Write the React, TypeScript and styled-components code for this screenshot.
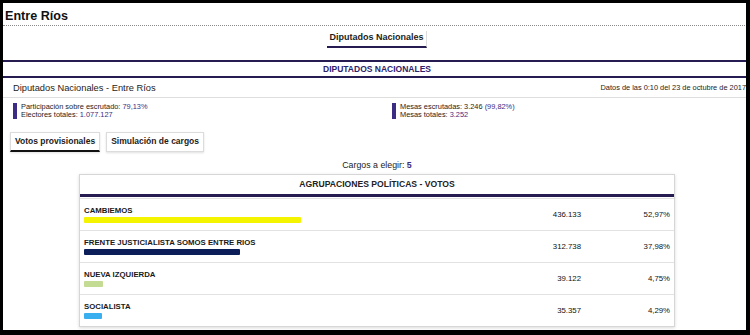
import React from "react";
import styled, { createGlobalStyle, css } from "styled-components";

const ink = "#1c1c1c";
const purple = "#3c2c84";
const navyLine = "#261c52";

const GlobalStyle = createGlobalStyle`
  html, body {
    margin: 0;
    padding: 0;
    background: #000;
  }
  body {
    font-family: "Liberation Sans", Arial, sans-serif;
    color: ${ink};
  }
`;

const Frame = styled.div`
  width: 743px;
  height: 327px;
  margin: 3px 4px 0 3px;
  background: #fff;
  overflow: hidden;
`;

const Content = styled.div`
  width: 748px;
`;

const Title = styled.h1`
  margin: 0;
  padding: 6px 2px 1px;
  font-size: 12.6px;
  line-height: 15px;
  font-weight: bold;
  color: #111;
  border-bottom: 1px dotted #8a8a8a;
`;

const TabBar = styled.nav`
  display: flex;
  justify-content: center;
  padding-top: 5px;
`;

const Tab = styled.div`
  padding: 1px 2px 3px;
  font-size: 9px;
  line-height: 11px;
  font-weight: bold;
  color: ${ink};
  border-bottom: 2px solid ${navyLine};
  border-right: 1px solid #dcdcdc;
`;

const SectionHeader = styled.h2`
  margin: 12px 0 0;
  height: 14px;
  line-height: 14px;
  border-top: 2px solid ${navyLine};
  border-bottom: 2px solid ${navyLine};
  text-align: center;
  font-size: 8.5px;
  font-weight: bold;
  color: #2e216c;
`;

const MetaRow = styled.div`
  display: flex;
  align-items: center;
  justify-content: space-between;
  height: 19px;
  padding: 0 5px 0 10px;
  border-bottom: 1px solid #dedede;
`;

const MetaTitle = styled.span`
  font-size: 9.3px;
  color: ${ink};
`;

const MetaDate = styled.span`
  font-size: 7.4px;
  color: ${ink};
`;

const InfoRow = styled.div`
  display: grid;
  grid-template-columns: 379px 1fr;
  padding: 5px 0 0 10px;
`;

const InfoBlock = styled.div`
  border-left: 4px solid ${purple};
  padding-left: 4px;
  font-size: 7.4px;
  line-height: 8px;
  color: ${ink};
`;

const Value = styled.span`
  color: ${purple};
`;

const ButtonRow = styled.div`
  display: flex;
  gap: 6px;
  margin-top: 13px;
  padding-left: 7px;
`;

const Button = styled.button<{ $active?: boolean }>`
  margin: 0;
  padding: 3px 4px 4px;
  font-family: inherit;
  font-size: 8.5px;
  line-height: 11px;
  font-weight: bold;
  color: ${ink};
  background: #fff;
  border: 1px solid #dcdcdc;
  box-shadow: 0 1px 2px rgba(0, 0, 0, 0.12);
  ${({ $active }) =>
    $active &&
    css`
      padding-bottom: 3px;
      border-bottom: 2px solid #111;
    `}
`;

const Cargos = styled.p`
  margin: 8px 0 0;
  text-align: center;
  font-size: 8.8px;
  line-height: 10px;
  color: ${ink};

  b {
    color: ${purple};
  }
`;

const Table = styled.div`
  width: 594px;
  margin: 4px auto 0;
  border: 1px solid #d6d6d6;
  box-shadow: 0 1px 3px rgba(0, 0, 0, 0.15);
`;

const TableHead = styled.div`
  height: 19px;
  line-height: 19px;
  margin-bottom: 1px;
  border-bottom: 3px solid ${navyLine};
  text-align: center;
  font-size: 8.6px;
  font-weight: bold;
  color: #222;
`;

const Row = styled.div`
  display: grid;
  grid-template-columns: 1fr 120px 93px;
  height: 31px;
  border-top: 1px solid #e2e2e2;
`;

const NameCell = styled.div`
  padding: 7px 4px 0;
`;

const PartyName = styled.div`
  font-size: 7.8px;
  line-height: 10px;
  font-weight: bold;
  color: #1a1a1a;
`;

const Bar = styled.div<{ $color: string }>`
  height: 6px;
  margin-top: 1px;
  border-radius: 1px;
  background: ${({ $color }) => $color};
`;

const NumCell = styled.div<{ $pad?: number }>`
  display: flex;
  align-items: center;
  justify-content: flex-end;
  padding-right: ${({ $pad }) => $pad ?? 0}px;
  font-size: 7.8px;
  color: #111;
`;

const results = [
  { name: "CAMBIEMOS", votes: "436.133", pct: 52.97, color: "#f4f400" },
  { name: "FRENTE JUSTICIALISTA SOMOS ENTRE RIOS", votes: "312.738", pct: 37.98, color: "#0c1e5a" },
  { name: "NUEVA IZQUIERDA", votes: "39.122", pct: 4.75, color: "#c3db92" },
  { name: "SOCIALISTA", votes: "35.357", pct: 4.29, color: "#3aaff0" },
];

const fmtPct = (n: number) => n.toFixed(2).replace(".", ",") + "%";

export default function App() {
  return (
    <>
      <GlobalStyle />
      <Frame>
        <Content>
          <Title>Entre Ríos</Title>
          <TabBar>
            <Tab>Diputados Nacionales</Tab>
          </TabBar>
          <SectionHeader>DIPUTADOS NACIONALES</SectionHeader>
          <MetaRow>
            <MetaTitle>Diputados Nacionales - Entre Ríos</MetaTitle>
            <MetaDate>Datos de las 0:10 del 23 de octubre de 2017</MetaDate>
          </MetaRow>
          <InfoRow>
            <InfoBlock>
              Participación sobre escrutado: <Value>79,13%</Value>
              <br />
              Electores totales: <Value>1.077.127</Value>
            </InfoBlock>
            <InfoBlock>
              Mesas escrutadas: 3.246 <Value>(99,82%)</Value>
              <br />
              Mesas totales: <Value>3.252</Value>
            </InfoBlock>
          </InfoRow>
          <ButtonRow>
            <Button $active>Votos provisionales</Button>
            <Button>Simulación de cargos</Button>
          </ButtonRow>
          <Cargos>
            Cargos a elegir: <b>5</b>
          </Cargos>
          <Table>
            <TableHead>AGRUPACIONES POLÍTICAS - VOTOS</TableHead>
            {results.map((r) => (
              <Row key={r.name}>
                <NameCell>
                  <PartyName>{r.name}</PartyName>
                  <Bar $color={r.color} style={{ width: `${r.pct * 4.1}px` }} />
                </NameCell>
                <NumCell>{r.votes}</NumCell>
                <NumCell $pad={4}>{fmtPct(r.pct)}</NumCell>
              </Row>
            ))}
          </Table>
        </Content>
      </Frame>
    </>
  );
}
